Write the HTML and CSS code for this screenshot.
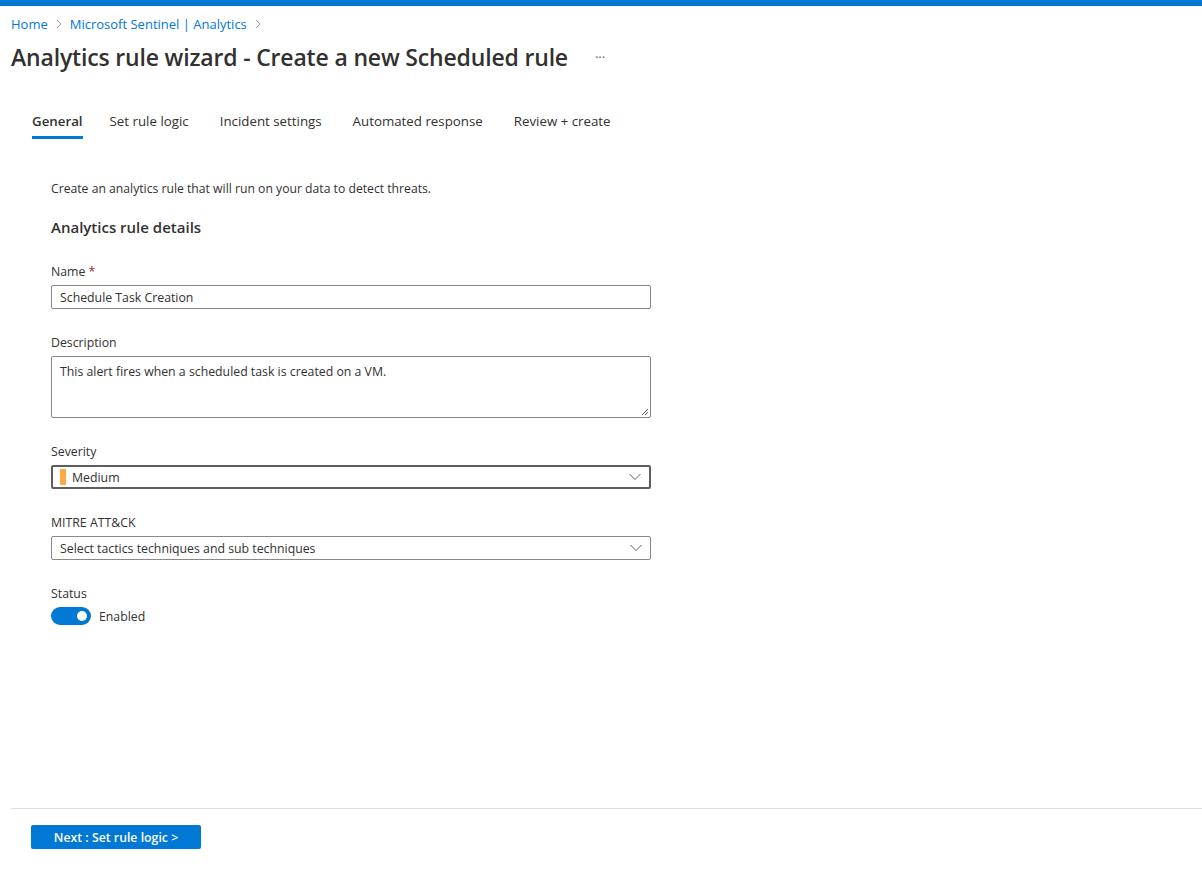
FILE: index.html
```html
<!DOCTYPE html>
<html lang="en">
<head>
<meta charset="utf-8">
<title>Analytics rule wizard - Create a new Scheduled rule</title>
<link rel="stylesheet" href="styles.css">
</head>
<body>
<div class="page">
  <div class="topbar"></div>
  <nav class="breadcrumb">
    <a class="crumb" href="#">Home</a>
    <span class="sep"><svg width="8" height="10" viewBox="0 0 8 10"><path d="M2 1l4 4-4 4" fill="none" stroke="#a19f9d" stroke-width="1"/></svg></span>
    <a class="crumb" href="#">Microsoft Sentinel | Analytics</a>
    <span class="sep"><svg width="8" height="10" viewBox="0 0 8 10"><path d="M2 1l4 4-4 4" fill="none" stroke="#a19f9d" stroke-width="1"/></svg></span>
  </nav>
  <div class="title-row">
    <h1 class="title">Analytics rule wizard - Create a new Scheduled rule</h1>
    <span class="more">···</span>
  </div>
  <div class="tabs">
    <div class="tab active">General</div>
    <div class="tab">Set rule logic</div>
    <div class="tab">Incident settings</div>
    <div class="tab">Automated response</div>
    <div class="tab">Review + create</div>
  </div>
  <main class="content">
    <p class="intro">Create an analytics rule that will run on your data to detect threats.</p>
    <h2 class="section">Analytics rule details</h2>
    <div class="field first">
      <div class="label">Name <span class="req">*</span></div>
      <div class="input">Schedule Task Creation</div>
    </div>
    <div class="field">
      <div class="label">Description</div>
      <div class="textarea">This alert fires when a scheduled task is created on a VM.
        <svg class="grip" width="8" height="8" viewBox="0 0 8 8"><path d="M7 1L1 7M7 4L4 7" stroke="#605e5c" stroke-width="1" fill="none"/></svg>
      </div>
    </div>
    <div class="field">
      <div class="label">Severity</div>
      <div class="select focused">
        <span class="sev-bar"></span>
        <span class="select-text">Medium</span>
        <svg class="chev" width="12" height="8" viewBox="0 0 12 8"><path d="M0.5 1l5.5 5.5L11.5 1" fill="none" stroke="#605e5c" stroke-width="1"/></svg>
      </div>
    </div>
    <div class="field">
      <div class="label">MITRE ATT&amp;CK</div>
      <div class="select">
        <span class="select-text">Select tactics techniques and sub techniques</span>
        <svg class="chev" width="12" height="8" viewBox="0 0 12 8"><path d="M0.5 1l5.5 5.5L11.5 1" fill="none" stroke="#605e5c" stroke-width="1"/></svg>
      </div>
    </div>
    <div class="field">
      <div class="label">Status</div>
      <div class="toggle-row">
        <span class="toggle"><span class="knob"></span></span>
        <span class="toggle-text">Enabled</span>
      </div>
    </div>
  </main>
  <footer class="footer">
    <button class="primary">Next : Set rule logic &gt;</button>
  </footer>
</div>
</body>
</html>
```
FILE: styles.css
```css
* { box-sizing: border-box; }
html, body { margin: 0; padding: 0; background: #fff; }
body {
  font-family: "Open Sans", "Noto Sans", sans-serif;
  color: #323130;
  font-size: 12.3px;
}
.page {
  min-height: 100vh;
  display: flex;
  flex-direction: column;
}
.topbar { height: 6px; background: #0078d4; }
.breadcrumb {
  margin-top: 8px;
  padding-left: 11px;
  height: 20px;
  display: flex;
  align-items: center;
  gap: 7px;
  font-size: 13px;
}
.crumb { color: #0078d4; text-decoration: none; }
.sep { display: flex; align-items: center; }
.title-row {
  margin-top: 7px;
  padding-left: 11px;
  height: 32px;
  display: flex;
  align-items: center;
}
.title {
  margin: 0;
  font-size: 23px;
  font-weight: 600;
  letter-spacing: -0.17px;
  line-height: 32px;
  color: #323130;
}
.more {
  margin-left: 27px;
  font-size: 13px;
  color: #605e5c;
}
.tabs {
  margin-top: 38px;
  padding-left: 32px;
  display: flex;
  gap: 31px;
}
.tab {
  font-size: 13.3px;
  line-height: 20px;
  padding-bottom: 5px;
  border-bottom: 3px solid transparent;
  color: #323130;
}
.tab.active {
  font-weight: 600;
  border-bottom-color: #0078d4;
  margin-right: -4px;
}
.content {
  flex: 1;
  padding-left: 51px;
}
.intro {
  margin: 41px 0 0;
  font-size: 12.2px;
  line-height: 18px;
}
.section {
  margin: 19px 0 0;
  font-size: 15px;
  font-weight: 600;
  line-height: 20px;
}
.field { margin-top: 25px; width: 600px; }
.field.first { margin-top: 26px; }
.label {
  font-size: 12.3px;
  line-height: 18px;
  margin-bottom: 4px;
}
.req { color: #a4262c; }
.input, .select {
  height: 24px;
  border: 1px solid #8a8886;
  border-radius: 2px;
  font-size: 12.3px;
  display: flex;
  align-items: center;
  padding: 0 8px;
}
.textarea {
  position: relative;
  height: 62px;
  border: 1px solid #8a8886;
  border-radius: 2px;
  font-size: 12.3px;
  line-height: 18px;
  padding: 6px 8px;
}
.grip { position: absolute; right: 1px; bottom: 1px; }
.select.focused {
  border: 2px solid #605e5c;
  padding-left: 7px;
}
.sev-bar {
  width: 6px;
  height: 16px;
  background: #ffaa44;
  margin-right: 6px;
}
.select-text { flex: 1; }
.toggle-row {
  display: flex;
  align-items: center;
  gap: 8px;
  height: 18px;
}
.toggle {
  width: 40px;
  height: 18px;
  border-radius: 9px;
  background: #0078d4;
  position: relative;
}
.knob {
  position: absolute;
  right: 4px;
  top: 4px;
  width: 10px;
  height: 10px;
  border-radius: 50%;
  background: #fff;
}
.toggle-text { font-size: 12.3px; }
.footer {
  margin-left: 11px;
  border-top: 1px solid #e1dfdd;
  padding: 16px 0 31px 20px;
}
.primary {
  width: 170px;
  height: 24px;
  border: none;
  border-radius: 2px;
  background: #0078d4;
  color: #fff;
  font-family: "Open Sans", "Noto Sans", sans-serif;
  font-size: 12.3px;
  font-weight: 600;
  padding: 0;
}
```
